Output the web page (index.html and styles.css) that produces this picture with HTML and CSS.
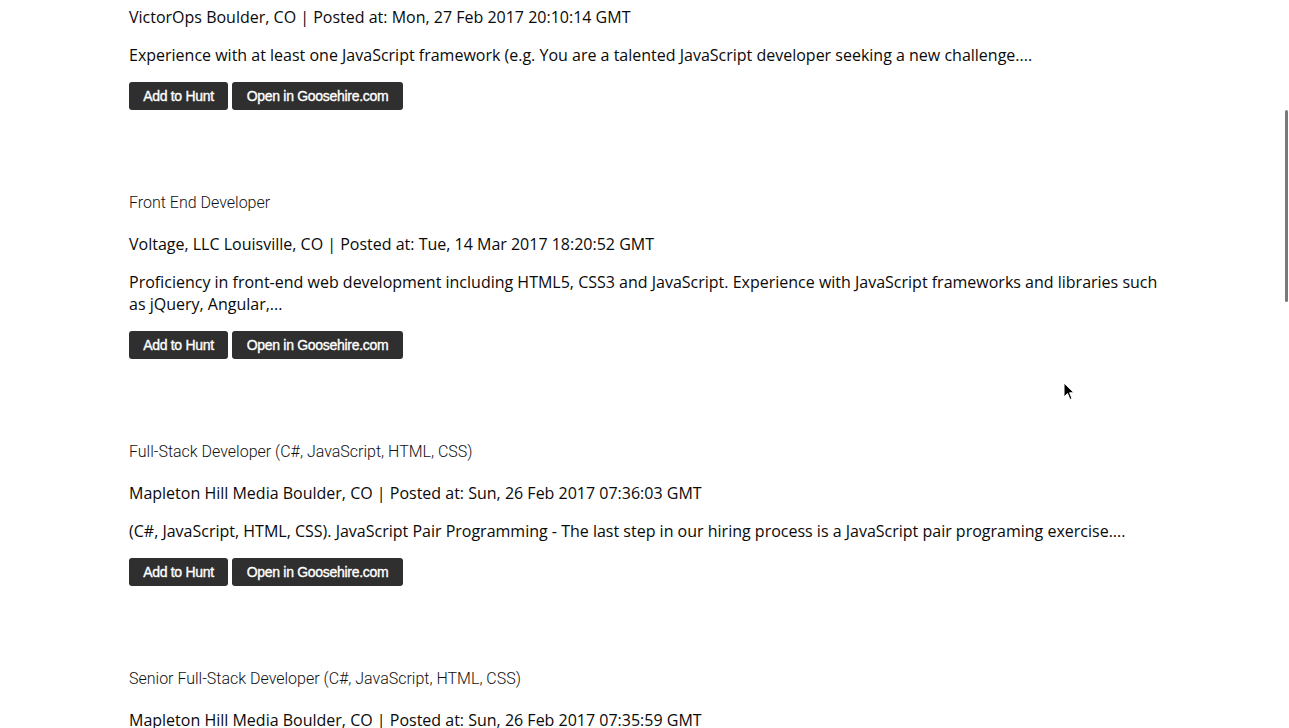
FILE: index.html
```html
<!DOCTYPE html>
<html lang="en">
<head>
<meta charset="utf-8">
<title>Jobs</title>
<link rel="stylesheet" href="styles.css">
</head>
<body>
<main class="jobs">
  <article class="job job-first">
    <p class="company">VictorOps Boulder, CO | Posted at: Mon, 27 Feb 2017 20:10:14 GMT</p>
    <p class="desc">Experience with at least one JavaScript framework (e.g. You are a talented JavaScript developer seeking a new challenge....</p>
    <div class="actions"><button class="btn">Add to Hunt</button> <button class="btn">Open in Goosehire.com</button></div>
  </article>
  <article class="job">
    <h3 class="title">Front End Developer</h3>
    <p class="company">Voltage, LLC Louisville, CO | Posted at: Tue, 14 Mar 2017 18:20:52 GMT</p>
    <p class="desc">Proficiency in front-end web development including HTML5, CSS3 and JavaScript. Experience with JavaScript frameworks and libraries such as jQuery, Angular,...</p>
    <div class="actions"><button class="btn">Add to Hunt</button> <button class="btn">Open in Goosehire.com</button></div>
  </article>
  <article class="job">
    <h3 class="title">Full-Stack Developer (C#, JavaScript, HTML, CSS)</h3>
    <p class="company">Mapleton Hill Media Boulder, CO | Posted at: Sun, 26 Feb 2017 07:36:03 GMT</p>
    <p class="desc">(C#, JavaScript, HTML, CSS). JavaScript Pair Programming - The last step in our hiring process is a JavaScript pair programing exercise....</p>
    <div class="actions"><button class="btn">Add to Hunt</button> <button class="btn">Open in Goosehire.com</button></div>
  </article>
  <article class="job">
    <h3 class="title">Senior Full-Stack Developer (C#, JavaScript, HTML, CSS)</h3>
    <p class="company">Mapleton Hill Media Boulder, CO | Posted at: Sun, 26 Feb 2017 07:35:59 GMT</p>
  </article>
</main>
<div class="scrollbar"></div>
<svg class="cursor" width="12" height="19" viewBox="0 0 12 19"><path d="M1 1 L1 15 L4.5 11.5 L7 17.5 L9 16.6 L6.6 10.8 L11 10.8 Z" fill="#000" stroke="#fff" stroke-width="1"/></svg>
</body>
</html>
```
FILE: styles.css
```css
html, body {
  margin: 0;
  padding: 0;
  background: #ffffff;
  overflow: hidden;
  height: 728px;
}
body {
  font-family: "Open Sans", "Liberation Sans", sans-serif;
  color: #0a0a0a;
}
.jobs {
  width: 1035px;
  margin-left: 129px;
  padding-top: 6px;
}
.job {
  padding-bottom: 82px;
}
.title {
  margin: 0 0 20px;
  padding-top: 1px;
  font-family: Roboto, "Liberation Sans", sans-serif;
  font-weight: 300;
  font-size: 16px;
  line-height: 20px;
  color: #111;
}
.company {
  margin: 0 0 16px;
  font-size: 16px;
  line-height: 22px;
}
.desc {
  margin: 0 0 16px;
  font-size: 16px;
  line-height: 22px;
}
.actions {
  display: flex;
  gap: 4px;
}
.btn {
  height: 28px;
  width: 99px;
  padding: 0;
  border: 0;
  border-radius: 3px;
  background: #2f2f2f;
  color: #fff;
  font-family: "Liberation Sans", Arial, sans-serif;
  font-size: 14px;
  letter-spacing: -0.3px;
  -webkit-text-stroke: 0.35px #fff;
  cursor: pointer;
}
.btn + .btn {
  width: 171px;
}
.scrollbar {
  position: absolute;
  top: 110px;
  right: 1px;
  width: 3px;
  height: 192px;
  border-radius: 2px;
  background: #7a7a7a;
}
.cursor {
  position: absolute;
  left: 1063px;
  top: 382px;
}
```
